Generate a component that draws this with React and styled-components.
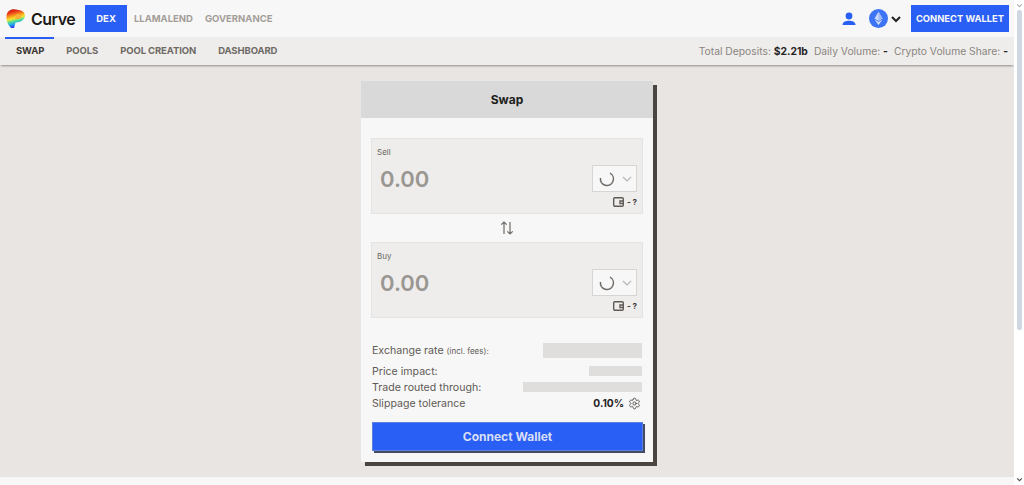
import React from "react";
import styled, { createGlobalStyle } from "styled-components";
import { Settings } from "lucide-react";

const Global = createGlobalStyle`
  html, body { margin: 0; padding: 0; height: 485px; overflow: hidden; background: #e8e5e2; }
  body { font-family: Inter, "Liberation Sans", sans-serif; }
  #root { height: 485px; }
  * { box-sizing: border-box; }
`;

const Shell = styled.div`display: flex; height: 485px; width: 1024px;`;
const Page = styled.div`flex: 1; min-width: 0; display: flex; flex-direction: column;`;
const ScrollTrack = styled.div`
  position: relative; width: 10px; background: #fff; display: flex; flex-direction: column; align-items: center;
  justify-content: space-between; padding: 2px 0 2px;
`;
const ScrollThumbWrap = styled.div`flex: 1; width: 100%; padding-top: 1px; display: flex; justify-content: center;`;
const ScrollThumb = styled.div`width: 5px; height: 320px; background: #cfd8e0; border-radius: 2px;`;

const TopBar = styled.header`
  height: 37px; background: #f7f7f7; display: flex; align-items: center; padding: 0 5px;
`;
const LogoText = styled.span`
  font-size: 16px; font-weight: 600; letter-spacing: -0.5px; color: #1c1917; margin-left: 5px; margin-right: 10px;
`;
const TopLink = styled.a`
  height: 27px; display: flex; align-items: center; font-size: 9.5px; font-weight: 700;
  padding: 0 ${p => (p.$active ? "11px" : "0")}; margin-right: ${p => (p.$active ? "7px" : "12px")};
  color: ${p => (p.$active ? "#f7f7f7" : "#a39e98")};
  background: ${p => (p.$active ? "#2a5ff5" : "transparent")};
`;
const Spacer = styled.div`flex: 1;`;
const ChainButton = styled.div`display: flex; align-items: center; gap: 2px; margin: 0 9px 0 12px;`;
const ConnectSmall = styled.button`
  width: 98px; height: 27px; margin-right: 0; border: 0; background: #2a5ff5; color: #f7f7f7;
  font: 700 9.4px Inter, sans-serif; padding: 0;
`;

const SubBar = styled.nav`
  position: relative; height: 28px; background: #eeedeb; display: flex; align-items: center;
  justify-content: space-between; padding: 0 6px 1px 16px;
  box-shadow: 0 2px 2px -1px #8f8c89;
`;
const SubLinks = styled.div`display: flex; gap: 22px;`;
const SubLink = styled.a`
  font-size: 9.5px; font-weight: 700; letter-spacing: -0.1px;
  color: ${p => (p.$active ? "#3b3733" : "#6f6a65")};
`;
const ActiveMark = styled.span`
  position: absolute; left: 5px; top: 0; width: 49px; height: 2px; background: #2a5ff5;
`;
const Stats = styled.div`display: flex; gap: 6px; font-size: 10.3px; color: #8a8580;`;
const Stat = styled.span`white-space: nowrap; b { color: #26221f; font-weight: 700; }`;

const Main = styled.main`flex: 1; display: flex; justify-content: center; padding: 16px 0 0 0; background: #e8e5e2;`;
const Card = styled.section`
  width: 292px; height: 381px; background: #f7f7f7; box-shadow: 4px 4px 0 #4a4541;
  display: flex; flex-direction: column;
`;
const CardTitle = styled.h2`
  margin: 0; height: 37px; background: #d9d9d9; display: flex; align-items: center; justify-content: center;
  font-size: 12px; font-weight: 700; color: #211e1b;
`;
const CardBody = styled.div`padding: 20px 10px 0; display: flex; flex-direction: column;`;
const Field = styled.div`
  height: 76px; background: #eeedeb; border: 1px solid #e5e4e2; padding: 8px 5px 0 5px;
  display: flex; flex-direction: column;
`;
const FieldLabel = styled.div`font-size: 8px; line-height: 10px; color: #6b6661;`;
const FieldRow = styled.div`display: flex; justify-content: space-between; align-items: center; margin-top: 8px;`;
const Amount = styled.div`font-size: 22px; font-weight: 600; color: #9a9692; padding-left: 3px; letter-spacing: 0;`;
const TokenSelect = styled.div`
  width: 45px; height: 27px; background: #f7f7f7; border: 1px solid #d6d5d3;
  display: flex; align-items: center; justify-content: space-between; padding: 0 3px 0 6px;
`;
const BalanceRow = styled.div`
  display: flex; justify-content: flex-end; align-items: center; gap: 3px; margin-top: 5px;
  font-size: 8px; font-weight: 700; color: #3a3633; padding-right: 0;
`;
const SwapIcon = styled.div`height: 28px; display: flex; align-items: center; justify-content: center; color: #6f6a65;`;
const Details = styled.div`padding: 24px 1px 0 1px; display: flex; flex-direction: column;`;
const Row = styled.div`
  display: flex; justify-content: space-between; align-items: center; height: ${p => p.$h || 16}px;
  margin-bottom: ${p => p.$mb || 0}px; font-size: 10.6px; color: #5f5a55;
`;
const Small = styled.small`font-size: 8px;`;
const Skeleton = styled.div`width: ${p => p.$w}px; height: ${p => p.$h}px; background: #dfdedc;`;
const Slip = styled.div`
  display: flex; align-items: center; gap: 4px; font-size: 10.2px; font-weight: 700; color: #26221f; padding-right: 1px;
  svg { color: #4a4541; }
`;
const ConnectBig = styled.button`
  margin: 11px 0 0 1px; height: 29px; width: 271px; border: 1px solid #5d7fe0; background: #2a5ff5;
  color: #d9dff7; font: 700 12px Inter, sans-serif; box-shadow: 2px 2px 0 #454a63;
`;
const Footer = styled.footer`height: 8px; background: #f7f7f7;`;

const Logo = () => (
  <svg width="21" height="21" viewBox="0 0 21 21">
    <defs>
      <linearGradient id="lg" x1="0" y1="0" x2="0.25" y2="1">
        <stop offset="0" stopColor="#b8140c" />
        <stop offset="0.22" stopColor="#e8341a" />
        <stop offset="0.42" stopColor="#f9a01e" />
        <stop offset="0.56" stopColor="#f5e62c" />
        <stop offset="0.7" stopColor="#4fdc9a" />
        <stop offset="0.85" stopColor="#1ea4f2" />
        <stop offset="1" stopColor="#2a36f0" />
      </linearGradient>
    </defs>
    <path d="M1.5 8 C2 3 6 0.5 11 1.5 L16 2.5 C20 4 20.8 8 19 10.5 C17 13.5 13.5 14.5 10.5 14.5 L9 20 L6 20 C2.5 16.5 1 12 1.5 8 Z" fill="url(#lg)" />
    <path d="M11.5 6 L17 7 C17 9.5 14 11.5 10 11 Z" fill="#fbb03a" />
  </svg>
);

const UserIcon = () => (
  <svg width="16" height="16" viewBox="0 0 16 16" fill="#2a5ff5">
    <circle cx="8" cy="5" r="3.4" />
    <path d="M1.5 14 C1.5 10.5 5 9.7 8 9.7 C11 9.7 14.5 10.5 14.5 14 Z" />
  </svg>
);

const EthIcon = () => (
  <svg width="19" height="19" viewBox="0 0 19 19">
    <circle cx="9.5" cy="9.5" r="9.5" fill="#3d73f5" />
    <path d="M9.5 2.8 L5.5 9.6 L9.5 12 L13.5 9.6 Z" fill="#c9d8fc" />
    <path d="M9.5 2.8 L13.5 9.6 L9.5 12 Z" fill="#9db9fa" />
    <path d="M5.5 10.5 L9.5 16 L13.5 10.5 L9.5 12.9 Z" fill="#d8e3fd" />
  </svg>
);

const Chevron = ({ size = 12, color = "#26221f", w = 2 }) => (
  <svg width={size} height={size} viewBox="0 0 12 12" fill="none" stroke={color} strokeWidth={w}>
    <path d="M2 4 L6 8 L10 4" />
  </svg>
);

const Spinner = () => (
  <svg width="16" height="16" viewBox="0 0 16 16" fill="none" stroke="#6f6a65" strokeWidth="1.5">
    <path d="M1.5 7 A6.5 6.5 0 1 0 11 2.2" />
  </svg>
);

const WalletIcon = () => (
  <svg width="11" height="10" viewBox="0 0 11 10" fill="none" stroke="#5f5a55" strokeWidth="1.4">
    <rect x="0.7" y="0.7" width="9.6" height="8.6" rx="1.2" />
    <path d="M10 4 H7 V6.5 H10" />
  </svg>
);

const SwapArrows = () => (
  <svg width="14" height="14" viewBox="0 0 14 14" fill="none" stroke="currentColor" strokeWidth="1.2">
    <path d="M4 13 V1 M1.3 3.7 L4 1 L6.7 3.7" />
    <path d="M10 1 V13 M7.3 10.3 L10 13 L12.7 10.3" />
  </svg>
);

const SwapField = ({ label }) => (
  <Field>
    <FieldLabel>{label}</FieldLabel>
    <FieldRow>
      <Amount>0.00</Amount>
      <TokenSelect>
        <Spinner />
        <Chevron color="#b8b6b3" w={1.2} />
      </TokenSelect>
    </FieldRow>
    <BalanceRow>
      <WalletIcon />
      <span>- ?</span>
    </BalanceRow>
  </Field>
);

export default function App() {
  return (
    <>
      <Global />
      <Shell>
        <Page>
          <TopBar>
            <Logo />
            <LogoText>Curve</LogoText>
            <TopLink $active>DEX</TopLink>
            <TopLink>LLAMALEND</TopLink>
            <TopLink>GOVERNANCE</TopLink>
            <Spacer />
            <UserIcon />
            <ChainButton>
              <EthIcon />
              <Chevron />
            </ChainButton>
            <ConnectSmall>CONNECT WALLET</ConnectSmall>
          </TopBar>
          <SubBar>
            <ActiveMark />
            <SubLinks>
              <SubLink $active>SWAP</SubLink>
              <SubLink>POOLS</SubLink>
              <SubLink>POOL CREATION</SubLink>
              <SubLink>DASHBOARD</SubLink>
            </SubLinks>
            <Stats>
              <Stat>Total Deposits: <b>$2.21b</b></Stat>
              <Stat>Daily Volume: <b>-</b></Stat>
              <Stat>Crypto Volume Share: <b>-</b></Stat>
            </Stats>
          </SubBar>
          <Main>
            <Card>
              <CardTitle>Swap</CardTitle>
              <CardBody>
                <SwapField label="Sell" />
                <SwapIcon><SwapArrows /></SwapIcon>
                <SwapField label="Buy" />
                <Details>
                  <Row $h={16} $mb={5}>
                    <span>Exchange rate <Small>(incl. fees):</Small></span>
                    <Skeleton $w={99} $h={15} />
                  </Row>
                  <Row><span>Price impact:</span><Skeleton $w={53} $h={10} /></Row>
                  <Row><span>Trade routed through:</span><Skeleton $w={119} $h={10} /></Row>
                  <Row><span>Slippage tolerance</span><Slip>0.10% <Settings size={13} strokeWidth={1.6} /></Slip></Row>
                </Details>
                <ConnectBig>Connect Wallet</ConnectBig>
              </CardBody>
            </Card>
          </Main>
          <Footer />
        </Page>
        <ScrollTrack>
          <Chevron size={7} color="#b0b0b0" />
          <ScrollThumbWrap><ScrollThumb /></ScrollThumbWrap>
          <Chevron size={7} color="#505050" />
        </ScrollTrack>
      </Shell>
    </>
  );
}
